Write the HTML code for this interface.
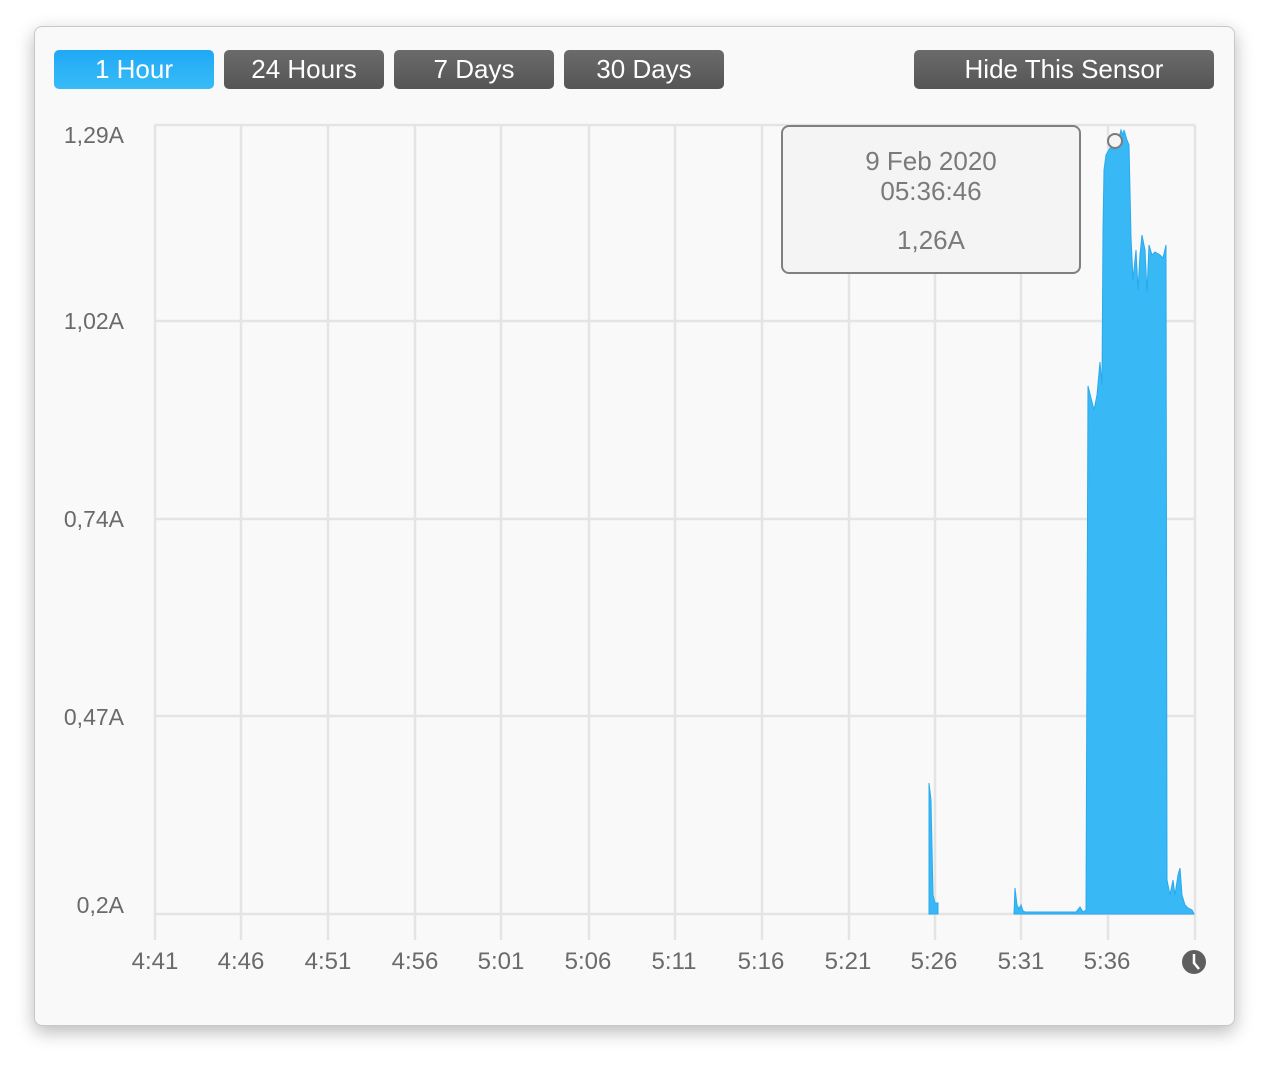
<!DOCTYPE html>
<html><head><style>
html,body{margin:0;padding:0;width:1268px;height:1068px;background:#fff;overflow:hidden;font-family:"Liberation Sans",sans-serif}
.win{position:absolute;left:34px;top:26px;width:1199px;height:998px;background:#f9f9f9;border:1px solid #c8c8c8;border-radius:8px;box-shadow:0 6px 18px rgba(0,0,0,0.28)}
.btn{position:absolute;top:50px;height:39px;border-radius:5px;color:#fff;font-size:26px;line-height:39px;text-align:center;background:linear-gradient(#6b6b6b,#555)}
.blue{background:linear-gradient(#1fa8f5,#38bcf7)}
.yl{position:absolute;left:30px;width:94px;text-align:right;font-size:23px;color:#6a6a6a}
.xl{position:absolute;top:948px;font-size:24px;color:#6a6a6a;transform:translateX(-50%)}
.tip{position:absolute;left:781px;top:125px;width:296px;height:145px;border:2px solid #808080;border-radius:8px;background:#f4f4f4;color:#7a7a7a;text-align:center;font-size:26px}
</style></head><body>
<div class="win"></div>
<div class="btn blue" style="left:54px;width:160px">1 Hour</div>
<div class="btn" style="left:224px;width:160px">24 Hours</div>
<div class="btn" style="left:394px;width:160px">7 Days</div>
<div class="btn" style="left:564px;width:160px">30 Days</div>
<div class="btn" style="left:914px;width:300px">Hide This Sensor</div>
<svg style="position:absolute;left:0;top:0" width="1268" height="1068">
<g stroke="#e4e4e4" stroke-width="2.5" fill="none">
<line x1="155" y1="125" x2="1195" y2="125"/><line x1="155" y1="321" x2="1195" y2="321"/><line x1="155" y1="519" x2="1195" y2="519"/><line x1="155" y1="716" x2="1195" y2="716"/><line x1="155" y1="914" x2="1195" y2="914"/>
<line x1="155" y1="125" x2="155" y2="940"/><line x1="241" y1="125" x2="241" y2="940"/><line x1="328" y1="125" x2="328" y2="940"/><line x1="415" y1="125" x2="415" y2="940"/><line x1="501" y1="125" x2="501" y2="940"/><line x1="589" y1="125" x2="589" y2="940"/><line x1="675" y1="125" x2="675" y2="940"/><line x1="762" y1="125" x2="762" y2="940"/><line x1="849" y1="125" x2="849" y2="940"/><line x1="935" y1="125" x2="935" y2="940"/><line x1="1021" y1="125" x2="1021" y2="940"/><line x1="1108" y1="125" x2="1108" y2="940"/><line x1="1195" y1="125" x2="1195" y2="940"/>
</g>
<g fill="#38b9f6" stroke="#2aa9ec" stroke-width="1">
<polygon points="929,914 929,783 931,800 933,895 935,903 938,903 938,914"/>
<polygon points="1014,914 1015,888 1017,905 1019,909 1021,905 1023,911 1025,912 1076,912 1080,907 1083,912 1086,910 1088,386 1091,398 1094,410 1097,395 1100,362 1102,385 1103,230 1104,170 1106,155 1110,148 1115,150 1119,138 1121,130 1123,135 1124,130 1127,140 1129,145 1131,237 1133,280 1136,250 1138,290 1140,255 1142,235 1145,250 1147,292 1149,245 1152,255 1155,252 1160,255 1163,258 1166,245 1167,880 1170,895 1173,880 1175,895 1178,875 1180,868 1182,895 1185,905 1188,908 1192,910 1194,914"/>
</g>
<circle cx="1115" cy="141" r="7" fill="#f4f4f4" stroke="#7a7a7a" stroke-width="2"/>
<circle cx="1194" cy="962" r="12" fill="#5f5f5f"/>
<path d="M1194 954 V963 L1199 969" stroke="#fff" stroke-width="2.5" fill="none"/>
</svg>
<div class="yl" style="top:122px">1,29A</div>
<div class="yl" style="top:308px">1,02A</div>
<div class="yl" style="top:506px">0,74A</div>
<div class="yl" style="top:704px">0,47A</div>
<div class="yl" style="top:892px">0,2A</div>
<div class="xl" style="left:155px">4:41</div><div class="xl" style="left:241px">4:46</div><div class="xl" style="left:328px">4:51</div><div class="xl" style="left:415px">4:56</div><div class="xl" style="left:501px">5:01</div><div class="xl" style="left:588px">5:06</div><div class="xl" style="left:674px">5:11</div><div class="xl" style="left:761px">5:16</div><div class="xl" style="left:848px">5:21</div><div class="xl" style="left:934px">5:26</div><div class="xl" style="left:1021px">5:31</div><div class="xl" style="left:1107px">5:36</div>
<div class="tip"><div style="margin-top:19px;line-height:30px">9 Feb 2020<br>05:36:46</div><div style="margin-top:19px">1,26A</div></div>
</body></html>
